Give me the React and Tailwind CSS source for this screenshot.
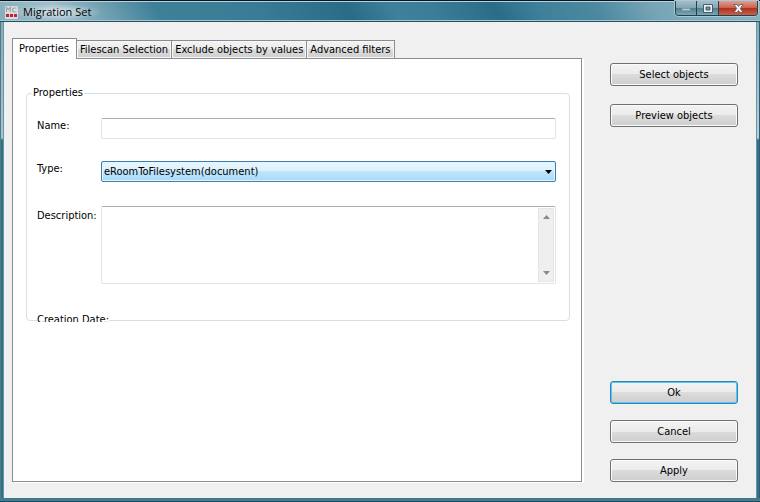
const face =
  'bg-[linear-gradient(to_bottom,#f3f3f3_0%,#ebebeb_50%,#dcdcdc_50%,#cecece_100%)]';

function SideButton({ children, primary, className = '' }) {
  const edge = primary
    ? 'border-[#3c7fb1] shadow-[inset_0_0_0_1px_#48cdf5]'
    : 'border-[#707070] shadow-[inset_0_0_0_1px_#fbfbfb]';
  return (
    <button
      type="button"
      className={`h-[23px] w-full rounded-[3px] border text-center leading-5 ${face} ${edge} ${className}`}
    >
      {children}
    </button>
  );
}

function Logo() {
  return (
    <svg width="13" height="13" viewBox="0 0 13 13" aria-hidden="true">
      <rect width="13" height="13" rx="1" fill="#d9dcdd" />
      <path d="M1.500 6V1.500l1.900 2 1.900-2V6M11.500 2H8.800L7.700 3v2l1.100 1h2.700" fill="none" stroke="#a0a5a7" strokeWidth="1.200" />
      <path d="M1 8h3v3H1zM5 8h3v3H5zM9 8h3v3H9z" fill="#c4202f" />
    </svg>
  );
}

const tabs = ['Filescan Selection', 'Exclude objects by values', 'Advanced filters'];

function TabBar() {
  return (
    <div role="tablist" className="relative -mb-px flex items-end">
      <button
        type="button"
        role="tab"
        aria-selected="true"
        className="h-[21px] border border-b-0 border-[#898c95] bg-white pb-px pl-[6px] pr-[7px] leading-4"
      >
        Properties
      </button>
      {tabs.map((name) => (
        <button
          key={name}
          type="button"
          role="tab"
          aria-selected="false"
          className={`-ml-px h-[19px] border border-[#898c95] px-[3px] pt-px leading-4 shadow-[inset_0_0_0_1px_#f8f8f8] ${face}`}
        >
          {name}
        </button>
      ))}
    </div>
  );
}

function WindowControls() {
  return (
    <div className="flex h-[15px] overflow-hidden rounded-b-[4px] border border-t-0 border-[#24404d] shadow-[0_0_0_1px_#a9c8d4]">
      <button type="button" aria-label="Minimize" className="flex w-[21px] items-center justify-center border-r border-[#24404d] bg-[linear-gradient(to_bottom,#a5bfca_0%,#83a5b3_50%,#4f7f92_50%,#7ba6b6_100%)]">
        <svg className="mt-[3px]" width="10" height="4" viewBox="0 0 10 4"><path d="M1 .5h8v2H1z" fill="#b8cdd6" stroke="#7795a2" strokeWidth=".6" /></svg>
      </button>
      <button type="button" aria-label="Maximize" className="flex w-[22px] items-center justify-center border-r border-[#24404d] bg-[linear-gradient(to_bottom,#a5bfca_0%,#83a5b3_50%,#4f7f92_50%,#7ba6b6_100%)]">
        <svg width="10" height="9" viewBox="0 0 10 9"><path d="M.5.5h9v8h-9z" fill="#e9eff2" stroke="#4a5d68" /><path d="M3 3h4v3H3z" fill="#6c93a3" stroke="#4a5d68" /></svg>
      </button>
      <button type="button" aria-label="Close" className="flex w-[38px] items-center justify-center bg-[linear-gradient(to_bottom,#dda093_0%,#c8604c_50%,#b02f18_50%,#c9604a_100%)]">
        <svg width="11" height="9" viewBox="0 0 11 9"><path d="M1 .5h3l1.500 2 1.500-2h3L7.300 4.500 10 8.500H7L5.500 6.500 4 8.500H1l2.700-4z" fill="#f2f4f6" stroke="#5a5560" strokeWidth=".8" /></svg>
      </button>
    </div>
  );
}

function Properties() {
  return (
    <fieldset className="min-w-0 rounded-[4px] border border-[#d5dfe5] pl-[10px] pr-[13px]">
      <legend className="-ml-[5px] px-px leading-4">Properties</legend>
      <div className="grid grid-cols-[64px_1fr] gap-y-[22px] pt-[17px]">
        <label htmlFor="name" className="leading-4">Name:</label>
        <input id="name" type="text" className="h-[21px] w-full rounded-[2px] border border-[#e2e3ea] border-t-[#abadb3] px-1 outline-none" />
        <label htmlFor="type" className="leading-4">Type:</label>
        <div className="relative">
          <select
            id="type"
            className="block h-[21px] w-full appearance-none rounded-[2px] border border-[#3c7fb1] bg-[linear-gradient(to_bottom,#eaf6fd_0%,#d9f0fc_50%,#bee6fd_50%,#a7d9f5_100%)] px-[2px] leading-[19px] shadow-[inset_0_0_0_1px_#e4f5fd] outline-none"
          >
            <option>eRoomToFilesystem(document)</option>
          </select>
          <svg className="pointer-events-none absolute right-[4px] top-[9px]" width="7" height="4" viewBox="0 0 7 4"><path d="M0 0h7L3.500 4z" /></svg>
        </div>
        <label htmlFor="description" className="pt-1 leading-4">Description:</label>
        <div className="mt-[2px] flex h-[78px] rounded-[2px] border border-[#e2e3ea] border-t-[#abadb3] p-px">
          <textarea id="description" className="min-w-0 flex-1 resize-none overflow-hidden px-1 outline-none" />
          <div className="flex w-4 flex-col justify-between border border-[#e6e6e6] bg-[#efefef]">
            <button type="button" aria-label="Scroll up" className="flex h-4 items-center justify-center">
              <svg width="7" height="4" viewBox="0 0 7 4"><path d="M0 4h7L3.500 0z" fill="#8a8a8a" /></svg>
            </button>
            <button type="button" aria-label="Scroll down" className="flex h-4 items-center justify-center">
              <svg width="7" height="4" viewBox="0 0 7 4"><path d="M0 0h7L3.500 4z" fill="#8a8a8a" /></svg>
            </button>
          </div>
        </div>
      </div>
      <div className="relative -mb-[2px] mt-[27px] h-[11px] overflow-hidden">
        <span className="block w-fit bg-white pt-px leading-4">Creation Date:</span>
      </div>
    </fieldset>
  );
}

export default function App() {
  return (
    <div className="flex min-h-screen flex-col bg-[#3a7f98] font-['DejaVu_Sans_Condensed','DejaVu_Sans',sans-serif] text-[11px] text-black">
      <header className="flex h-[22px] items-start justify-between border-b border-t border-b-[#24505f] border-t-[#06121c] bg-[linear-gradient(60deg,#86adbc_0%,#a0bfcb_8%,#7aa6b6_13%,#3f8099_21%,#3a7b95_34%,#2a6b85_46%,#3f809a_52%,#3b7c96_57%,#2b6c86_65%,#3f809a_71%,#4c88a0_78%,#79a6b6_86%,#8ab3c1_100%)] pl-[5px] pr-[2px] shadow-[inset_0_1px_0_#b9d3dc,inset_0_-1px_0_#a5c8d4]">
        <div className="flex items-center gap-[5px] pt-[3px]">
          <Logo />
          <h1 className="-ml-3 bg-[radial-gradient(closest-side,#ffffff99,#ffffff00)] px-3 font-['Open_Sans',sans-serif] text-[11px] leading-4">Migration Set</h1>
        </div>
        <WindowControls />
      </header>
      <div className="flex flex-1">
        <div className="w-1 shrink-0 border-l border-r border-l-[#5f737b] border-r-[#5f98ab] bg-[linear-gradient(to_bottom,#86adbc_0px,#a5c8d4_116px,#2d718a_118px)]" />
        <main className="flex min-w-0 flex-1 bg-[#f0f0f0] pb-4 pl-2 pr-[18px] pt-4">
          <div className="flex min-w-0 flex-1 flex-col">
            <TabBar />
            <div role="tabpanel" className="flex-1 border border-[#898c95] bg-white pl-[13px] pr-[11px] pt-[26px] shadow-[2px_1px_0_#ffffff]">
              <Properties />
            </div>
          </div>
          <aside className="ml-7 flex w-32 shrink-0 flex-col pt-[25px]">
            <SideButton>Select objects</SideButton>
            <SideButton className="mt-[18px]">Preview objects</SideButton>
            <div className="mt-auto flex flex-col gap-4">
              <SideButton primary>Ok</SideButton>
              <SideButton>Cancel</SideButton>
              <SideButton>Apply</SideButton>
            </div>
          </aside>
        </main>
        <div className="w-1 shrink-0 border-l border-r border-l-[#5f98ab] border-r-[#3b5a66] bg-[linear-gradient(to_bottom,#86adbc_0px,#b5d3dd_116px,#2d718a_118px)]" />
      </div>
      <footer className="h-1 border-b border-t border-b-[#1f4a5a] border-t-[#4f7280] bg-[#3a7f98]" />
    </div>
  );
}
